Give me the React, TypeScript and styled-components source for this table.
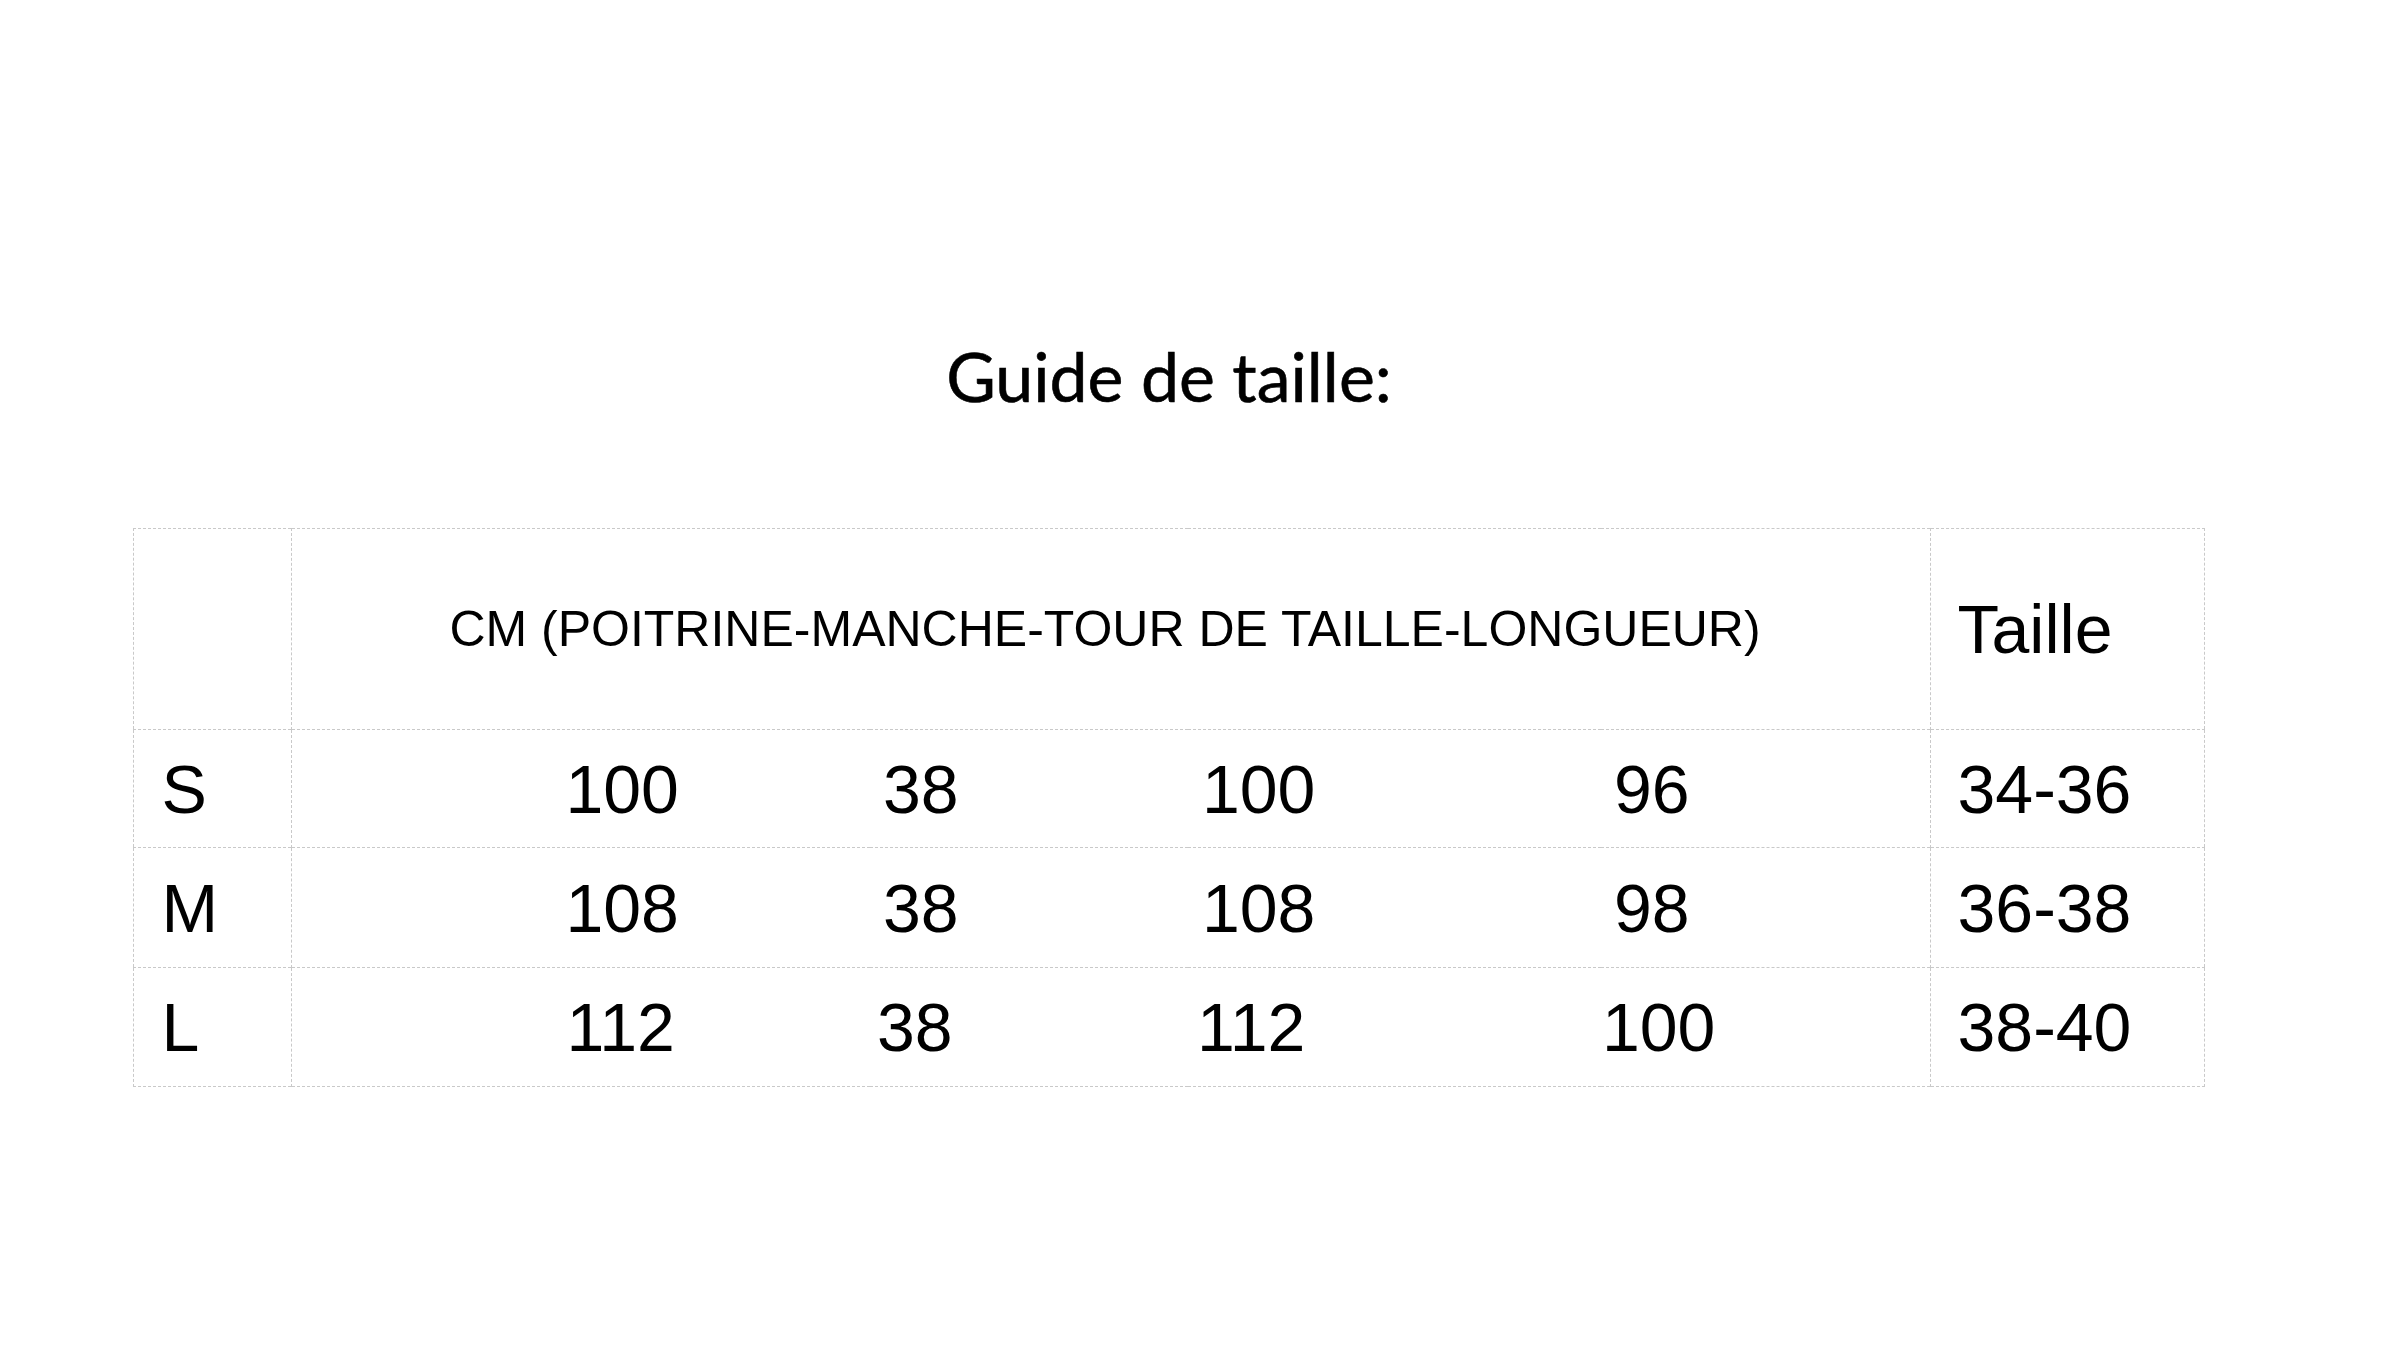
import React from 'react';
import styled, { createGlobalStyle } from 'styled-components';

const GlobalStyle = createGlobalStyle`
  html, body {
    margin: 0;
    padding: 0;
    background: #ffffff;
  }
`;

const Page = styled.div`
  width: 2400px;
  height: 1350px;
  padding: 342px 0 0 134px;
  box-sizing: border-box;
  background: #ffffff;
  color: #000000;
`;

const Sheet = styled.div`
  width: 2070px;
  display: flex;
  flex-direction: column;
  align-items: center;
`;

const Title = styled.h1`
  margin: 0 0 118px;
  font-family: Lato, 'Open Sans', sans-serif;
  font-weight: 400;
  font-size: 68px;
  line-height: 1;
  -webkit-text-stroke: 0.6px #000;
`;

const Table = styled.table`
  width: 2070px;
  table-layout: fixed;
  border-collapse: collapse;
  font-family: 'Liberation Sans', Arial, sans-serif;
  font-size: 68px;
  border: 1px dashed #c9c9c9;
`;

const HeadRow = styled.tr`
  height: 201px;
`;

const Row = styled.tr<{ $height: number }>`
  height: ${(p) => p.$height}px;
  border-top: 1px dashed #c9c9c9;
`;

const LabelCell = styled.td`
  border-right: 1px dashed #c9c9c9;
  padding: 0 0 0 27px;
  vertical-align: middle;
  font-weight: 400;
  text-align: left;
`;

const HeadText = styled.th`
  font-size: 50px;
  font-weight: 400;
  text-align: center;
  vertical-align: middle;
  padding: 0 12px 0 0;
  white-space: nowrap;
`;

const ValueCell = styled.td<{ $pad: number }>`
  padding: 0 0 0 ${(p) => p.$pad}px;
  vertical-align: middle;
  text-align: left;
  white-space: nowrap;
`;

const RangeCell = styled.td`
  border-left: 1px dashed #c9c9c9;
  padding: 0 0 0 27px;
  vertical-align: middle;
  text-align: left;
  font-weight: 400;
`;

const rows = [
  { size: 'S', values: ['100', '38', '100', '96'], pads: [273, 13, 14, 13], range: '34-36', height: 118 },
  { size: 'M', values: ['108', '38', '108', '98'], pads: [273, 13, 14, 13], range: '36-38', height: 120 },
  { size: 'L', values: ['112', '38', '112', '100'], pads: [274, 7, 9, 1], range: '38-40', height: 119 },
];

const App: React.FC = () => {
  return (
    <>
      <GlobalStyle />
      <Page>
        <Sheet>
          <Title>Guide de taille:</Title>
          <Table>
            <colgroup>
              <col style={{ width: 158 }} />
              <col style={{ width: 578 }} />
              <col style={{ width: 318 }} />
              <col style={{ width: 413 }} />
              <col style={{ width: 329 }} />
              <col style={{ width: 274 }} />
            </colgroup>
            <thead>
              <HeadRow>
                <LabelCell as="th" />
                <HeadText colSpan={4}>CM (POITRINE-MANCHE-TOUR DE TAILLE-LONGUEUR)</HeadText>
                <RangeCell as="th">Taille</RangeCell>
              </HeadRow>
            </thead>
            <tbody>
              {rows.map((r) => (
                <Row key={r.size} $height={r.height}>
                  <LabelCell>{r.size}</LabelCell>
                  {r.values.map((v, i) => (
                    <ValueCell key={i} $pad={r.pads[i]}>{v}</ValueCell>
                  ))}
                  <RangeCell>{r.range}</RangeCell>
                </Row>
              ))}
            </tbody>
          </Table>
        </Sheet>
      </Page>
    </>
  );
};

export default App;
